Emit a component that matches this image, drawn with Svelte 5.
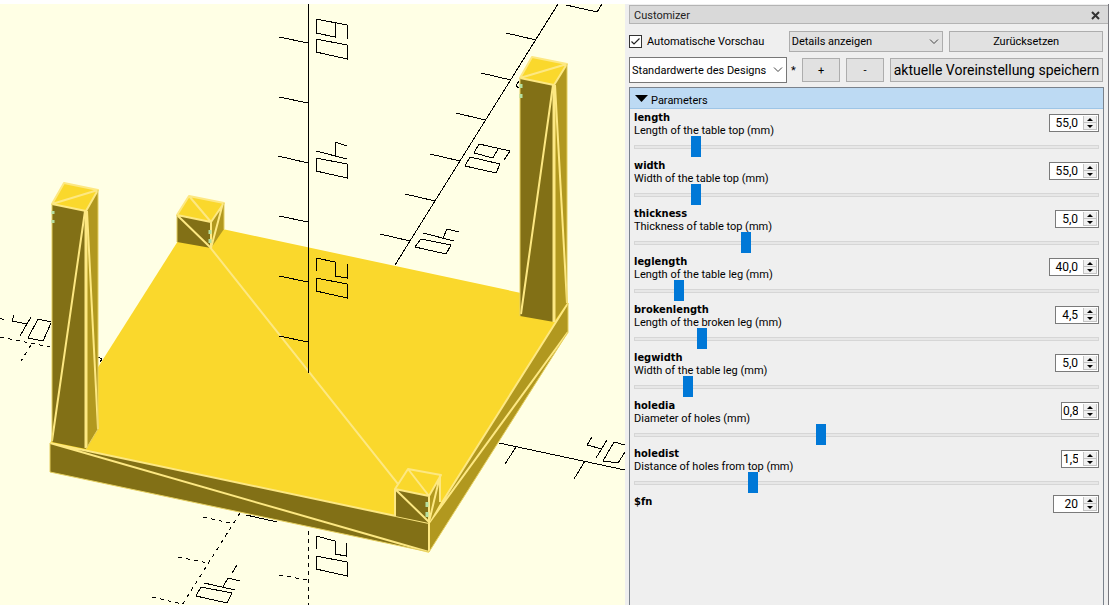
<script>
  const spinWidths = { 3: 38, 4: 44, 5: 50 };

  const parameters = [
    { name: 'length', note: 'Length of the table top (mm)', value: '55,0', position: 12.3, size: 5 },
    { name: 'width', note: 'Width of the table top (mm)', value: '55,0', position: 12.3, size: 5 },
    { name: 'thickness', note: 'Thickness of table top (mm)', value: '5,0', position: 23.5, size: 4 },
    { name: 'leglength', note: 'Length of the table leg (mm)', value: '40,0', position: 8.6, size: 5 },
    { name: 'brokenlength', note: 'Length of the broken leg (mm)', value: '4,5', position: 13.6, size: 4 },
    { name: 'legwidth', note: 'Width of the table leg (mm)', value: '5,0', position: 10.6, size: 4 },
    { name: 'holedia', note: 'Diameter of holes (mm)', value: '0,8', position: 40, size: 3 },
    { name: 'holedist', note: 'Distance of holes from top (mm)', value: '1,5', position: 25, size: 3 },
    { name: '$fn', value: '20', size: 4 }
  ];
</script>

<div class="window">
  <main class="view">
    <svg viewBox="0 4 625 601" preserveAspectRatio="xMidYMid slice" aria-hidden="true">
      <!-- axes behind the model -->
      <g class="axis">
        <path d="M558 4L395 265M506 33L536 40M481 73L511 80M456 113L485 120M430 154L460 161M405 194L435 201M380 234L410 241" />
        <path d="M566 5L597 12L602 4" />
        <path d="M504 160L510 151L479 144L474 153L493 158L498 149M470 157L500 164L496 173L465 166Z" />
        <path d="M423 233L454 241M459 232L447 229L443 238M421 239L451 245L446 254L415 247Z" />
        <path d="M499 443L625 470M516 447L505 464M585 461L574 479" />
        <path d="M592 437L587 445L602 449M607 440L596 458M625 445L614 442L603 461L618 463L625 452" />
        <path d="M0 318L4 320M14 315L12 321L27 324M31 317L20 336M51 322L38 319L28 338L43 341L51 323M98 357L102 359L100 362" />
        <path d="M246 515L277 522M204 583L235 590M240 581L228 578L223 587M237 565L232 573M201 587L232 593L227 603L196 596Z" />
        <path d="M316 549V536L335 541V554L346 556V543M316 556L347 562V576L316 569Z" />
        <path d="M519 88L516 86L519 81" />
        <path class="dashed" d="M0 337L50 347M31 345L21 361M240 513L182 605M203 517L230 523M178 557L208 563M152 597L182 604M308.500 531V605M279 575L308 580" />
      </g>

      <!-- table plate -->
      <path class="top" d="M50 443L190 222L568 303L429 523Z" />
      <path class="front" d="M50 443L429 523V552L50 472Z" />
      <path class="side" d="M429 523L568 303V332L429 552Z" />
      <path class="edge" d="M190 222L429 523M50 443L429 523L568 303M50 443L429 552M429 523V552M429 523L568 332" />
      <path class="rim" d="M50 443V472L429 552L568 332V303" />

      <!-- back left stump -->
      <path class="top" d="M189 196L224 203L211 222L177 215Z" />
      <path class="front" d="M177 215L211 222V248L177 242Z" />
      <path class="side" d="M211 222L224 203V229L211 248Z" />
      <path class="edge" d="M189 196L224 203L211 222L177 215ZM189 196L211 222V248M177 215L211 248L223 203" />
      <path class="rim" d="M177 215V242M224 203V229" />
      <path class="hole" d="M210 230V234M210 239V243" />

      <!-- left leg -->
      <path class="top" d="M64 183L98 190L86 211L52 204Z" />
      <path class="front" d="M52 204L86 211V449L52 442Z" />
      <path class="side" d="M86 211L98 190V429L86 449Z" />
      <path class="edge" d="M64 183L98 190L86 211L52 204ZM52 204L98 190M52 441L85 211M87 211L98 429" />
      <path class="edge thick" d="M86 211V448" />
      <path class="rim" d="M52 204V442M98 190V429L86 449" />
      <path class="hole" d="M53 211V214M53 220V223" />

      <!-- right leg -->
      <path class="top" d="M532 57L567 64L554 85L520 78Z" />
      <path class="front" d="M520 78L554 85V322L520 316Z" />
      <path class="side" d="M554 85L567 64V303L554 322Z" />
      <path class="edge" d="M532 57L567 64L554 85L520 78ZM520 78L567 64M521 314L553 85M555 85L567 303" />
      <path class="edge thick" d="M554 85V322" />
      <path class="rim" d="M520 78V316M567 64V303" />
      <path class="hole" d="M521 84V88M521 94V98" />

      <!-- front stump -->
      <path class="top" d="M408 469L441 475L429 496L395 489Z" />
      <path class="front" d="M395 489L429 496V523L395 516Z" />
      <path class="side" d="M429 496L441 475V502L429 523Z" />
      <path class="edge" d="M408 469L441 475L429 496L395 489ZM408 469L429 496V523M395 516V489L429 522L440 476V502" />
      <path class="hole" d="M427 502V507M427 512V517" />

      <!-- vertical axis in front of the model -->
      <g class="axis">
        <path d="M308.500 4V373M279 37L308 43M279 97L308 103M278 156L308 163M279 216L308 222M279 276L308 282M279 336L308 342" />
        <path d="M347 39V25L316 19V33L335 37V23M316 39L347 45V59L316 52Z" />
        <path d="M316 151L347 159M347 146L335 142V156M316 158L347 164V178L316 171Z" />
        <path d="M316 271V258L335 262V276L347 278V264M316 278L347 284V298L316 291Z" />
      </g>
    </svg>
  </main>

  <aside class="dock">
    <header class="title">
      <span>Customizer</span>
      <button class="close" aria-label="Close">
        <svg width="9" height="9" viewBox="0 0 9 9"><path d="M1 1L8 8M8 1L1 8" /></svg>
      </button>
    </header>

    <div class="controls">
      <div class="row">
        <label class="auto"><input type="checkbox" checked />Automatische Vorschau</label>
        <select class="detail" aria-label="Details"><option>Details anzeigen</option></select>
        <button class="reset">Zurücksetzen</button>
      </div>
      <div class="row presets">
        <select class="preset" aria-label="Preset"><option>Standardwerte des Designs</option></select>
        <span class="star">*</span>
        <button class="small">+</button>
        <button class="small">-</button>
        <button class="save">aktuelle Voreinstellung speichern</button>
      </div>
    </div>

    <section class="list">
      <button class="group">
        <svg width="13" height="7" viewBox="0 0 13 7"><path d="M0 0H13L6.500 7Z" /></svg>
        Parameters
      </button>
      {#each parameters as p, i}
        <div class="param" class:plain={!p.note}>
          <div class="head">
            <label for="value-{i}"><b>{p.name}</b>{#if p.note}<span>{p.note}</span>{/if}</label>
            <div class="spin" style:width="{p.size === 4 && !p.note ? 46 : spinWidths[p.size]}px">
              <input id="value-{i}" type="text" value={p.value} />
              <div class="steps">
                <button aria-label="Increase"><svg width="6" height="3" viewBox="0 0 6 3"><path d="M0 3L3 0L6 3Z" /></svg></button>
                <button aria-label="Decrease"><svg width="6" height="3" viewBox="0 0 6 3"><path d="M0 0L3 3L6 0Z" /></svg></button>
              </div>
            </div>
          </div>
          {#if p.note}
            <input class="slider" type="range" min="0" max="100" step="0.1" value={p.position} aria-label={p.name} />
          {/if}
        </div>
      {/each}
    </section>
  </aside>
</div>

<style>
  :global(body) {
    background: #fff;
  }
  * {
    box-sizing: border-box;
  }
  .window {
    display: grid;
    grid-template-columns: 625fr 484fr;
    height: 100vh;
    padding-top: 4px;
    overflow: hidden;
    font: 11px/13px Roboto, sans-serif;
    color: #000;
  }
  button,
  select,
  input {
    font: inherit;
    color: inherit;
    margin: 0;
    padding: 0;
    border-radius: 0;
  }

  .view {
    min-width: 0;
    min-height: 0;
    background: #ffffe5;
  }
  .view svg {
    display: block;
    width: 100%;
    height: 100%;
  }
  .axis path {
    fill: none;
    stroke: #000;
    stroke-width: 1;
    shape-rendering: crispEdges;
  }
  .axis .dashed {
    stroke-dasharray: 4 4;
  }
  .top {
    fill: #fad82c;
  }
  .front {
    fill: #827016;
  }
  .side {
    fill: #b1981f;
  }
  .edge {
    fill: none;
    stroke: #fde882;
    stroke-width: 2;
    stroke-linejoin: round;
  }
  .thick {
    stroke-width: 3;
  }
  .rim {
    fill: none;
    stroke: #e5cf60;
    stroke-width: 1;
  }
  .hole {
    fill: none;
    stroke: #b5dfa0;
    stroke-width: 3;
  }

  .dock {
    display: flex;
    flex-direction: column;
    min-width: 0;
    padding: 1px 0 0 4px;
    background: #efefef;
    border-right: 1px solid #77777d;
  }
  .title {
    display: flex;
    align-items: center;
    justify-content: space-between;
    height: 19px;
    padding: 2px 8px 0 4px;
    background: #d9d9d9;
    border: 1px solid #b4b4b4;
    border-right: 0;
    color: #222;
    font-size: 11px;
  }
  .close {
    display: flex;
    border: 0;
    background: none;
  }
  .close path {
    stroke: #333;
    stroke-width: 2;
    fill: none;
  }

  .controls {
    display: flex;
    flex-direction: column;
    gap: 5px;
    padding: 7px 5px 4px 0;
  }
  .row {
    display: flex;
    align-items: center;
    gap: 6px;
  }
  .row button,
  .row select {
    min-width: 0;
    background-color: #e1e1e1;
    border: 1px solid #adadad;
    height: 21px;
  }
  .row .auto {
    display: flex;
    align-items: center;
    gap: 5px;
    flex: 1 1 154px;
    white-space: nowrap;
  }
  .auto input {
    appearance: none;
    width: 13px;
    height: 13px;
    border: 1px solid #333;
    background: #fff
      url("data:image/svg+xml,%3Csvg xmlns='http://www.w3.org/2000/svg' width='11' height='11'%3E%3Cpath d='M1.500 5.500L4 8L9.500 2.500' fill='none' stroke='%23222' stroke-width='1.200'/%3E%3C/svg%3E");
  }
  .row select {
    appearance: none;
    padding: 0 16px 0 2px;
    background-image: url("data:image/svg+xml,%3Csvg xmlns='http://www.w3.org/2000/svg' width='10' height='6'%3E%3Cpath d='M1 .5L5 4.500L9 .5' fill='none' stroke='%23444'/%3E%3C/svg%3E");
    background-repeat: no-repeat;
    background-position: right 3px center;
  }
  .row .detail {
    flex: 1 1 155px;
  }
  .row .reset {
    flex: 1 1 154px;
  }
  .row .preset {
    flex: 1 1 158px;
    height: 26px;
    background-color: #fff;
    border-color: #777;
  }
  .star {
    width: 4px;
    margin: 0 1px 0 -2px;
  }
  .row .small,
  .row .save {
    height: 24px;
  }
  .row .small {
    flex: 1 1 38px;
  }
  .row .save {
    flex: 1 1 213px;
    font-size: 14px;
    white-space: nowrap;
  }

  .list {
    flex: 1;
    min-height: 0;
    margin-right: 4px;
    border: 1px solid #7a828c;
    border-bottom: 0;
  }
  .group {
    display: flex;
    align-items: center;
    gap: 3px;
    width: 100%;
    height: 21px;
    padding: 5px 5px 0;
    background: #bddaf3;
    border: 0;
    border-bottom: 1px solid #9ec5e6;
  }
  .group svg {
    margin-bottom: 5px;
  }
  .param {
    display: flex;
    flex-direction: column;
    height: 48px;
    padding: 1px 4px 0;
  }
  .head {
    display: flex;
    justify-content: space-between;
    height: 26px;
  }
  .head label {
    display: flex;
    flex-direction: column;
    padding-top: 1px;
  }
  .head b {
    font-family: 'DejaVu Sans Condensed', 'DejaVu Sans', sans-serif;
    font-size: 11px;
  }
  .spin {
    display: flex;
    height: 18px;
    margin-top: 4px;
    padding: 1px;
    background: #fff;
    border: 1px solid #7a7a7a;
  }
  .plain .spin {
    margin-top: 1px;
  }
  .spin input {
    flex: 1;
    min-width: 0;
    width: 0;
    border: 0;
    padding-right: 5px;
    background: none;
    text-align: right;
    font-size: 12px;
    outline: none;
  }
  .steps {
    display: flex;
    flex-direction: column;
    width: 14px;
  }
  .steps button {
    display: flex;
    flex: 1;
    align-items: center;
    justify-content: center;
    min-height: 0;
    background: #f0f0f0;
    border: 1px solid #c4c4c4;
    border-top-width: 0;
  }
  .slider {
    appearance: none;
    width: 100%;
    height: 21px;
    background: linear-gradient(#e7e7e7, #e7e7e7) center / 100% 4px no-repeat;
  }
  .slider::-webkit-slider-runnable-track {
    height: 4px;
    border: 1px solid #d6d6d6;
  }
  .slider::-webkit-slider-thumb {
    appearance: none;
    width: 10px;
    height: 21px;
    margin-top: -10px;
    background: #0078d7;
    border: 0;
  }
</style>
